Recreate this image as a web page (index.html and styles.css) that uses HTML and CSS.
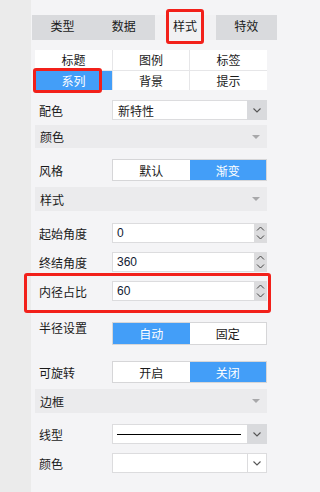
FILE: index.html
```html
<!DOCTYPE html>
<html lang="zh">
<head>
<meta charset="utf-8">
<link rel="stylesheet" href="styles.css">
</head>
<body>
<div class="app">
  <div class="sidebar"></div>
  <div class="panel">
    <div class="tabs">
      <div class="tab">类型</div>
      <div class="tab">数据</div>
      <div class="tab active">样式</div>
      <div class="tab">特效</div>
    </div>
    <div class="subtabs">
      <div class="sub">标题</div>
      <div class="sub">图例</div>
      <div class="sub">标签</div>
      <div class="sub on">系列</div>
      <div class="sub">背景</div>
      <div class="sub">提示</div>
    </div>

    <div class="row r-peise">
      <div class="label">配色</div>
      <div class="select">
        <div class="value">新特性</div>
        <div class="drop gray"><svg width="8" height="5" viewBox="0 0 8 5"><path d="M0.5 0.5 L4 4 L7.5 0.5" fill="none" stroke="#555" stroke-width="1.1"/></svg></div>
      </div>
    </div>

    <div class="header h-color">颜色<span class="caret"></span></div>

    <div class="row r-style">
      <div class="label">风格</div>
      <div class="seg">
        <div class="opt">默认</div>
        <div class="opt on">渐变</div>
      </div>
    </div>

    <div class="header h-style">样式<span class="caret"></span></div>

    <div class="row r-start">
      <div class="label">起始角度</div>
      <div class="input">
        <div class="value num">0</div>
        <div class="spin"><svg width="9" height="16" viewBox="0 0 9 16"><path d="M1 5.5 L4.5 2 L8 5.5 M1 10.5 L4.5 14 L8 10.5" fill="none" stroke="#444" stroke-width="1"/></svg></div>
      </div>
    </div>
    <div class="row r-end">
      <div class="label">终结角度</div>
      <div class="input">
        <div class="value num">360</div>
        <div class="spin"><svg width="9" height="16" viewBox="0 0 9 16"><path d="M1 5.5 L4.5 2 L8 5.5 M1 10.5 L4.5 14 L8 10.5" fill="none" stroke="#444" stroke-width="1"/></svg></div>
      </div>
    </div>
    <div class="row r-inner">
      <div class="label">内径占比</div>
      <div class="input">
        <div class="value num">60</div>
        <div class="spin"><svg width="9" height="16" viewBox="0 0 9 16"><path d="M1 5.5 L4.5 2 L8 5.5 M1 10.5 L4.5 14 L8 10.5" fill="none" stroke="#444" stroke-width="1"/></svg></div>
      </div>
    </div>

    <div class="row r-radius">
      <div class="label">半径设置</div>
      <div class="seg tall">
        <div class="opt on">自动</div>
        <div class="opt">固定</div>
      </div>
    </div>

    <div class="row r-rotate">
      <div class="label">可旋转</div>
      <div class="seg">
        <div class="opt">开启</div>
        <div class="opt on">关闭</div>
      </div>
    </div>

    <div class="header h-border">边框<span class="caret"></span></div>

    <div class="row r-line">
      <div class="label">线型</div>
      <div class="select">
        <div class="value"><span class="line"></span></div>
        <div class="drop gray"><svg width="8" height="5" viewBox="0 0 8 5"><path d="M0.5 0.5 L4 4 L7.5 0.5" fill="none" stroke="#555" stroke-width="1.1"/></svg></div>
      </div>
    </div>
    <div class="row r-bcolor">
      <div class="label">颜色</div>
      <div class="select">
        <div class="value"></div>
        <div class="drop white"><svg width="8" height="5" viewBox="0 0 8 5"><path d="M0.5 0.5 L4 4 L7.5 0.5" fill="none" stroke="#555" stroke-width="1.1"/></svg></div>
      </div>
    </div>
  </div>

  <div class="mark m-tab"></div>
  <div class="mark m-sub"></div>
  <div class="mark m-inner"></div>
</div>
</body>
</html>
```

FILE: styles.css
```css
* { box-sizing: border-box; }
html, body { margin: 0; padding: 0; }
body {
  font-family: "Liberation Sans", "Noto Sans CJK SC", sans-serif;
  font-size: 12px;
  color: #1a1a1a;
  background: #f4f4f6;
}
.app {
  position: relative;
  display: flex;
  width: 277px;
  height: 492px;
  overflow: hidden;
}
.sidebar {
  width: 31px;
  flex: none;
  background: #ebebeb;
}
.panel {
  flex: 1;
  background: #f4f4f6;
  padding: 15px 0 0 0;
}
.tabs {
  display: grid;
  grid-template-columns: repeat(4, 61.25px);
  margin-left: 1px;
  height: 25px;
  background: #d9dadd;
}
.tab {
  display: flex;
  align-items: center;
  justify-content: center;
  line-height: 25px;
}
.tab.active { background: #f1f1f3; }

.subtabs {
  display: grid;
  grid-template-columns: 77px 76px 77px;
  grid-auto-rows: 19.5px;
  gap: 1px;
  margin: 10px 0 0 4px;
  width: 232px;
  background: #e6e6e8;
}
.sub {
  background: #fff;
  display: flex;
  align-items: center;
  justify-content: center;
}
.sub.on { background: #439ef8; color: #fff; }

.row {
  display: flex;
  align-items: center;
  margin-left: 4px;
  width: 232px;
}
.label {
  width: 77px;
  flex: none;
  padding-left: 4px;
}
.r-peise { margin-top: 10px; }
.r-style { margin-top: 11px; }
.r-start { margin-top: 12px; }
.r-end { margin-top: 9px; }
.r-inner { margin-top: 9px; }
.r-radius { margin-top: 21px; align-items: flex-start; }
.r-radius .label { padding-top: 0; line-height: 14px; }
.r-rotate { margin-top: 16px; }
.r-line { margin-top: 11px; }
.r-bcolor { margin-top: 9px; }

.select, .input {
  flex: 1;
  height: 20px;
  display: flex;
  background: #fff;
  border: 1px solid #dcdcde;
}
.value {
  flex: 1;
  display: flex;
  align-items: center;
  padding-left: 5px;
}
.num { color: #111a33; padding-left: 4px; }
.drop {
  width: 20px;
  flex: none;
  display: flex;
  align-items: center;
  justify-content: center;
  margin: -1px -1px -1px 0;
}
.drop.gray { background: #d9dadd; }
.drop.white { background: #fff; border-left: 1px solid #dcdcde; margin: 0; width: 19px; }
.line {
  display: block;
  width: 124px;
  height: 1px;
  background: #000;
  margin-left: -1px;
}
.spin {
  width: 13px;
  flex: none;
  display: flex;
  align-items: center;
  justify-content: center;
  background: #dcdcde;
  margin: -1px -1px -1px 0;
}

.seg {
  flex: 1;
  display: flex;
  height: 22px;
  border: 1px solid #d6d6d8;
  background: #fff;
}
.seg.tall { height: 23px; }
.opt {
  flex: 1;
  display: flex;
  align-items: center;
  justify-content: center;
}
.opt.on { background: #439ef8; color: #fff; }

.header {
  position: relative;
  margin-left: 4px;
  width: 232px;
  background: #ebebed;
  display: flex;
  align-items: center;
  padding-left: 5px;
}
.h-color { margin-top: 5px; height: 23px; }
.h-style { margin-top: 6px; height: 24px; }
.h-border { margin-top: 6px; height: 24px; }
.caret {
  position: absolute;
  right: 7px;
  top: 50%;
  margin-top: -2px;
  width: 0;
  height: 0;
  border-left: 4px solid transparent;
  border-right: 4px solid transparent;
  border-top: 4px solid #a8a8aa;
}

.mark {
  position: absolute;
  border: 3px solid #f2201a;
  border-radius: 3px;
}
.m-tab { left: 166px; top: 9px; width: 38px; height: 35px; }
.m-sub { left: 33px; top: 68px; width: 69px; height: 25px; }
.m-inner { left: 24px; top: 273px; width: 247px; height: 40px; }
```
